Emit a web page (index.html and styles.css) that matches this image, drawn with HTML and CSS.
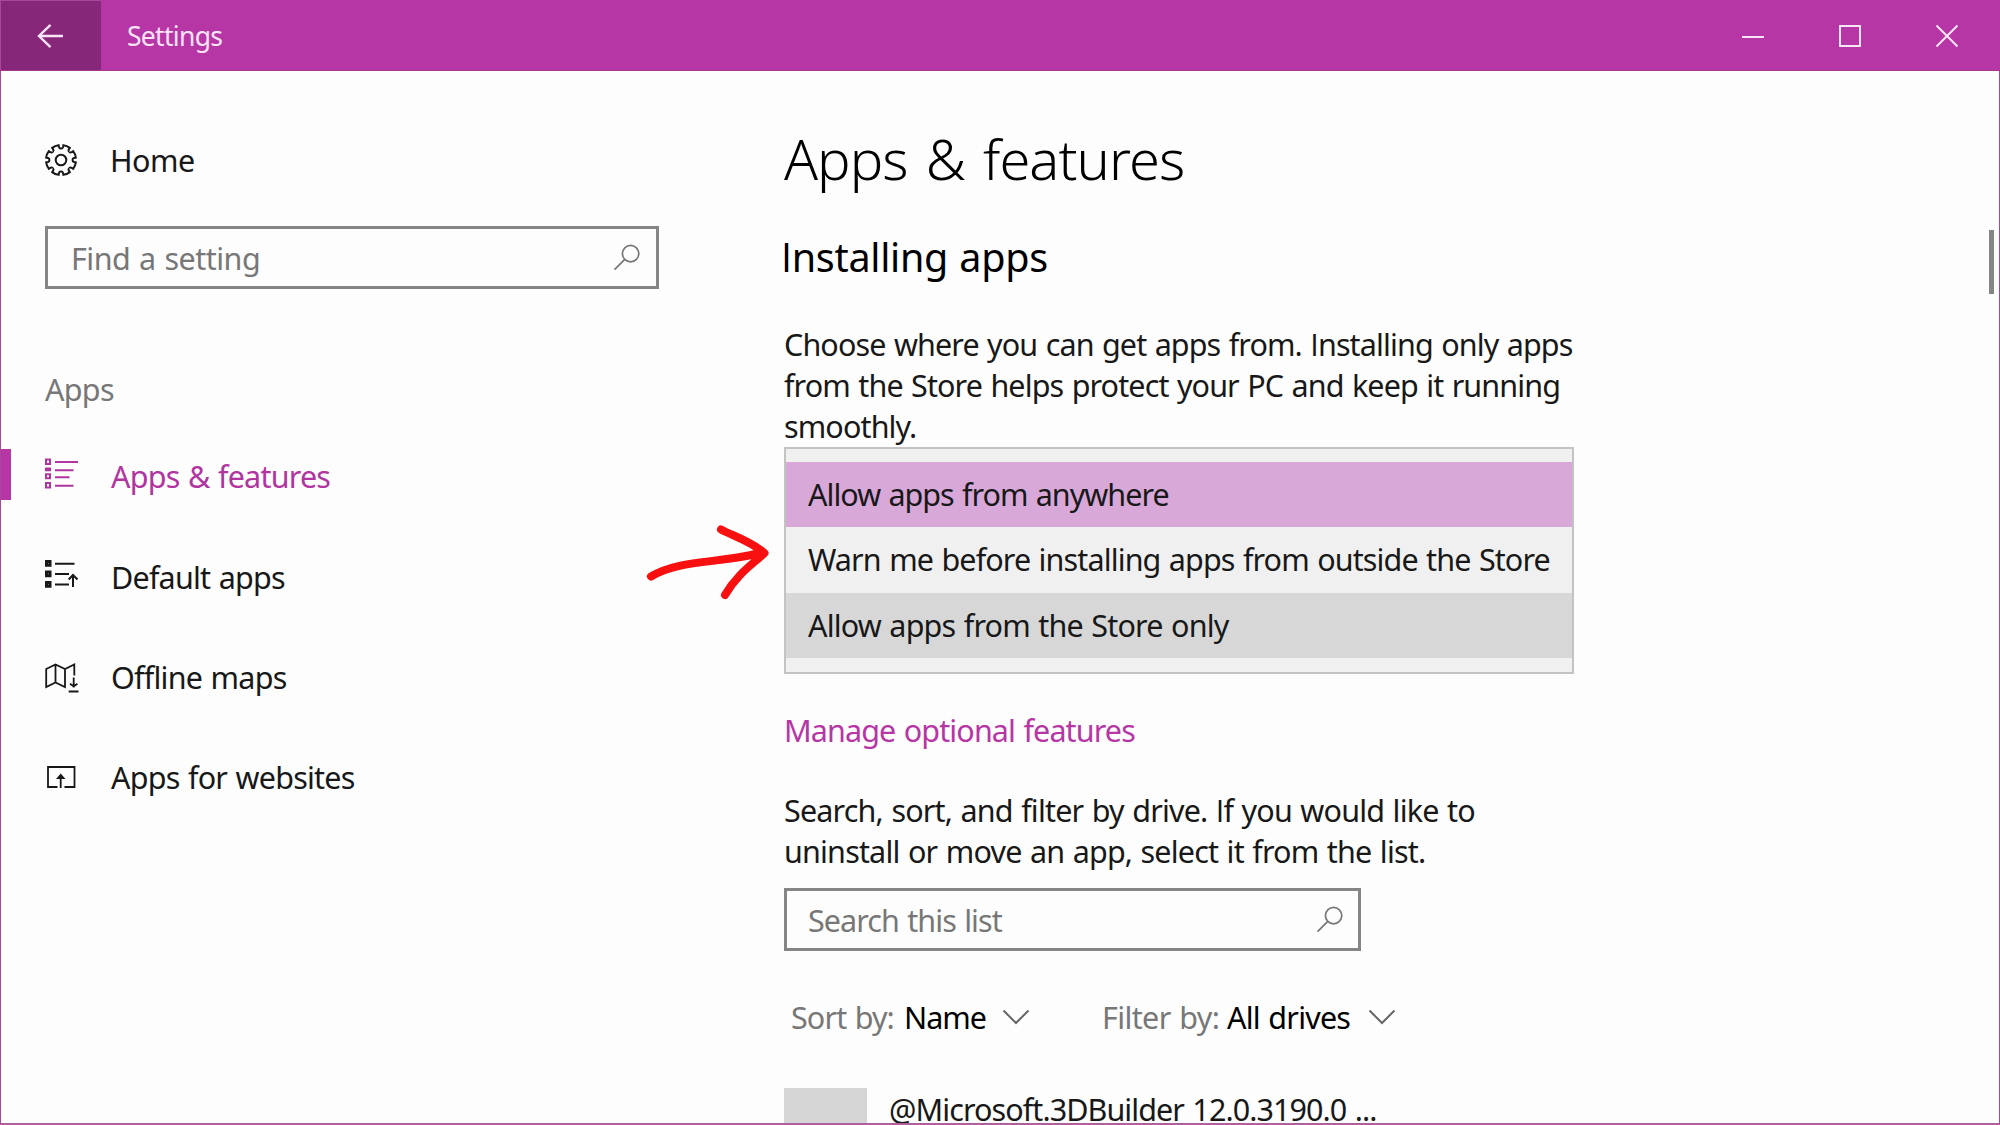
FILE: index.html
```
<!DOCTYPE html>
<html>
<head lang="en">
    <meta charset="UTF-8">
    <title>Settings</title>
    <link rel="stylesheet" href="styles.css">
</head>
<body>
<div class="window">
    <div class="titlebar">
        <a class="back" href="javascript:;">
            <svg width="28" height="26" viewBox="0 0 28 26"><path d="M26 13H2M13.5 1.8L2 13l11.5 11.2"/></svg>
        </a>
        <div class="title">Settings</div>
        <div class="controls">
            <a href="javascript:;"><svg width="24" height="24" viewBox="0 0 24 24"><path d="M1 13h22"/></svg></a>
            <a href="javascript:;"><svg width="24" height="24" viewBox="0 0 24 24"><path d="M2 2h20v20H2z"/></svg></a>
            <a href="javascript:;"><svg width="24" height="24" viewBox="0 0 24 24"><path d="M1.5 1.5l21 21M22.5 1.5l-21 21"/></svg></a>
        </div>
    </div>

    <div class="content">
        <div class="sidebar">
            <a class="home" href="javascript:;">
                <svg class="icon gear" width="36" height="36" viewBox="-16 -18 36 36">
                    <defs><path id="tooth" d="M-4.4-10.7Q-2.9-11.2-3.1-12.8L-3.5-14.6Q0-15.6 3.5-14.6L3.1-12.8Q2.9-11.2 4.4-10.7"/></defs>
                    <circle r="5.3"/>
                    <use href="#tooth" transform="rotate(22.5)"/>
                    <use href="#tooth" transform="rotate(67.5)"/>
                    <use href="#tooth" transform="rotate(112.5)"/>
                    <use href="#tooth" transform="rotate(157.5)"/>
                    <use href="#tooth" transform="rotate(202.5)"/>
                    <use href="#tooth" transform="rotate(247.5)"/>
                    <use href="#tooth" transform="rotate(292.5)"/>
                    <use href="#tooth" transform="rotate(337.5)"/>
                </svg>
                <span>Home</span>
            </a>
            <div class="search find">
                <span>Find a setting</span>
                <svg width="28" height="28" viewBox="0 0 28 28"><circle cx="17.6" cy="9.6" r="8.2"/><path d="M11.8 15.4L1.5 25.7"/></svg>
            </div>
            <div class="group">Apps</div>
            <ul class="nav">
                <li class="active">
                    <svg class="icon" width="36" height="36" viewBox="0 0 36 36">
                        <path d="M1 1.5h4v4.5h-4zM1 10.5h4v1.8h-4zM1 16.3h4v4h-4zM1 25h4v4.5h-4z"/>
                        <path d="M10 4h23M10 12.3h18.5M10 19.3h14.5M10 27.7h18.5"/>
                    </svg>
                    <span>Apps &amp; features</span>
                </li>
                <li>
                    <svg class="icon" width="36" height="36" viewBox="0 0 36 36">
                        <path class="thick" d="M1.5 2.5h3.5v3.7h-3.5zM1.5 13h3.5v3.7h-3.5zM1.5 23.5h3.5v3.7h-3.5z"/>
                        <path d="M10 4.8h19.5M10 15h14M10 25.5h14M28 28V16M23.7 20.5L28 16l4.5 4.5"/>
                    </svg>
                    <span>Default apps</span>
                </li>
                <li>
                    <svg class="icon thin" width="36" height="36" viewBox="0 0 36 36">
                        <path d="M29.3 16.5V5.500L20 10 10.5 5.500 1.2 10v18l9.300-4.500L20 28V10M10.500 5.500v18"/>
                        <path d="M28.700 18.500v10M25 24.800l3.700 2.500 3.700-2.500M23.700 32.500h9.800"/>
                    </svg>
                    <span>Offline maps</span>
                </li>
                <li>
                    <svg class="icon thin" width="36" height="36" viewBox="0 0 36 36">
                        <path d="M12.5 28h-9.500V8h26.500v20H19.500M15.700 29V18"/>
                        <path class="fill" d="M11 20l4.700-5.500 4.800 5.500z"/>
                    </svg>
                    <span>Apps for websites</span>
                </li>
            </ul>
        </div>

        <div class="main">
            <h1>Apps &amp; features</h1>
            <h2><span class="cap">I</span>nstalling apps</h2>
            <p>Choose where you can get apps from. <span class="cap">I</span>nstalling only apps<br>from the Store helps protect your PC and keep it running<br>smoothly.</p>
            <div class="dropdown">
                <ul>
                    <li class="selected">Allow apps from anywhere</li>
                    <li>Warn me before installing apps from outside the Store</li>
                    <li class="hover">Allow apps from the Store only</li>
                </ul>
                <svg class="arrow" width="136" height="84" viewBox="0 0 136 84">
                    <path d="M8 54.5C35 38 70 42 115 31.5M78 7.5C90 14 106 18 121.5 31C110 42 94 52 82 73"/>
                </svg>
            </div>
            <a class="manage" href="javascript:;">Manage optional features</a>
            <p class="hint">Search, sort, and filter by drive. <span class="cap">I</span>f you would like to<br>uninstall or move an app, select it from the list.</p>
            <div class="search list">
                <span>Search this list</span>
                <svg width="28" height="28" viewBox="0 0 28 28"><circle cx="17.6" cy="9.6" r="8.2"/><path d="M11.8 15.4L1.5 25.7"/></svg>
            </div>
            <div class="filters">
                <div class="sort">
                    <span>Sort by:</span><b>Name</b>
                    <svg width="28" height="16" viewBox="0 0 28 16"><path d="M1.5 1.5L14 14 26.5 1.5"/></svg>
                </div>
                <div class="drive">
                    <span>Filter by:</span><b>All drives</b>
                    <svg width="28" height="16" viewBox="0 0 28 16"><path d="M1.5 1.5L14 14 26.5 1.5"/></svg>
                </div>
            </div>
            <div class="app">
                <div class="tile"></div>
                <div class="name">@Microsoft.3DBuilder 12.0.3190.0 ...</div>
            </div>
        </div>
        <div class="scrollbar"></div>
    </div>
</div>
</body>
</html>
```
FILE: styles.css
```
*{margin: 0; padding: 0; box-sizing: border-box}
ul{list-style: none}
a{color: inherit; text-decoration: none}
svg{display: block; fill: none; stroke: currentColor; stroke-width: 2; flex: none}

body{
    font-family: "Noto Sans", "Open Sans", sans-serif;
    font-size: 30.5px;
    line-height: 40px;
    letter-spacing: -0.88px;
    word-spacing: 1.3px;
    color: #181818;
    background: #fdfdfd;
    overflow: hidden;
}
.window{
    width: 2000px;
    height: 1125px;
    display: flex;
    flex-direction: column;
    border: 1px solid #a8479c;
    border-top: 0;
    border-bottom: 2px solid #b0609f;
    white-space: nowrap;
}

/* title bar */
.titlebar{
    height: 71px;
    margin: 0 -1px;
    display: flex;
    flex: none;
    background: #b636a5;
    border-bottom: 1px solid #a3388f;
    color: #fbe4f8;
}
.back{
    width: 101px;
    display: flex;
    align-items: center;
    justify-content: center;
    background: #86277a;
    border-left: 1px solid #a8479c;
    border-top: 1px solid #a8479c;
}
.back svg{stroke-width: 2.4}
.title{
    flex: 1;
    padding-left: 26px;
    font-size: 26.5px;
    line-height: 73px;
    letter-spacing: -0.7px;
}
.controls{
    display: flex;
    padding: 2px 5px 0 0;
}
.controls a{
    width: 97px;
    display: flex;
    align-items: center;
    justify-content: center;
}

.content{
    flex: 1;
    min-height: 0;
    display: flex;
    overflow: hidden;
}

/* sidebar */
.sidebar{width: 783px}
.home{
    display: flex;
    align-items: center;
    height: 40px;
    margin: 69px 0 0 44px;
    letter-spacing: -0.5px;
}
.icon{margin-right: 30px}
.gear{margin: -1px 29px 0 0}
.thick{stroke-width: 3}
.thin{stroke-width: 1.8}
.fill{fill: currentColor; stroke: none}

.search{
    display: flex;
    align-items: center;
    justify-content: space-between;
    height: 63px;
    border: 3px solid #858585;
    color: #777;
    letter-spacing: -0.93px;
}
.search svg{stroke-width: 1.7}
.find{
    width: 614px;
    margin: 46px 0 0 44px;
    padding: 0 15px 0 23px;
    letter-spacing: -0.5px;
}
.group{
    margin: 80px 0 0 44px;
    color: #777;
    letter-spacing: -0.7px;
}
.nav{margin-top: 17px}
.nav li{
    position: relative;
    display: flex;
    align-items: center;
    height: 100.4px;
    padding-left: 44px;
    letter-spacing: -0.78px;
}
.nav .active{color: #b035a0}
.nav .active:before{
    content: "";
    position: absolute;
    left: 0;
    top: 23px;
    width: 10px;
    height: 51px;
    background: #b636a5;
}

/* main column */
.main{
    width: 790px;
    padding-top: 57px;
}
.cap{font-family: "Open Sans", sans-serif}
h1{
    font-size: 56px;
    font-weight: 300;
    line-height: 60px;
    letter-spacing: -0.95px;
    word-spacing: 4.5px;
    color: #000;
}
h2{
    margin: 49px 0 0 -3px;
    font-size: 39.5px;
    font-weight: 400;
    line-height: 41px;
    letter-spacing: -0.3px;
    color: #000;
}
p{
    margin-top: 46px;
    line-height: 41px;
}
.dropdown{
    position: relative;
    height: 227px;
    margin-top: 0;
    padding: 13px 0;
    background: #f0f0f0;
    border: 2px solid #c3c3c3;
}
.dropdown li{
    height: 65.4px;
    padding-left: 22px;
    line-height: 64px;
}
.dropdown .selected{background: #d8a8d8; letter-spacing: -0.98px}
.dropdown .hover{background: #d7d7d7; letter-spacing: -0.82px}
.arrow{
    position: absolute;
    left: -143px;
    top: 73px;
    stroke: #f80f0f;
    stroke-width: 8;
    stroke-linecap: round;
    stroke-linejoin: round;
}
.manage{
    display: block;
    margin-top: 36px;
    color: #b636a5;
}
.hint{
    margin-top: 40px;
    letter-spacing: -0.82px;
}
.list{
    width: 577px;
    margin-top: 16px;
    padding: 0 14px 0 21px;
}

.filters{
    display: flex;
    margin-top: 46px;
    padding-left: 7px;
}
.filters div{
    display: flex;
    align-items: center;
}
.filters span{color: #777}
.filters b{
    font-weight: 400;
    letter-spacing: -1px;
    color: #000;
}
.filters svg{color: #666}
.sort{width: 311px}
.sort span{width: 113px}
.sort b{width: 98px}
.drive span{width: 125px; letter-spacing: -0.62px}
.drive b{width: 141px; letter-spacing: -0.78px}

.app{
    display: flex;
    margin-top: 51px;
}
.tile{
    width: 83px;
    height: 83px;
    background: #d6d6d6;
}
.name{
    padding: 1px 0 0 22px;
    letter-spacing: -0.92px;
}

.scrollbar{
    width: 5px;
    height: 64px;
    margin: 159px 5px 0 auto;
    background: #858585;
}
```
